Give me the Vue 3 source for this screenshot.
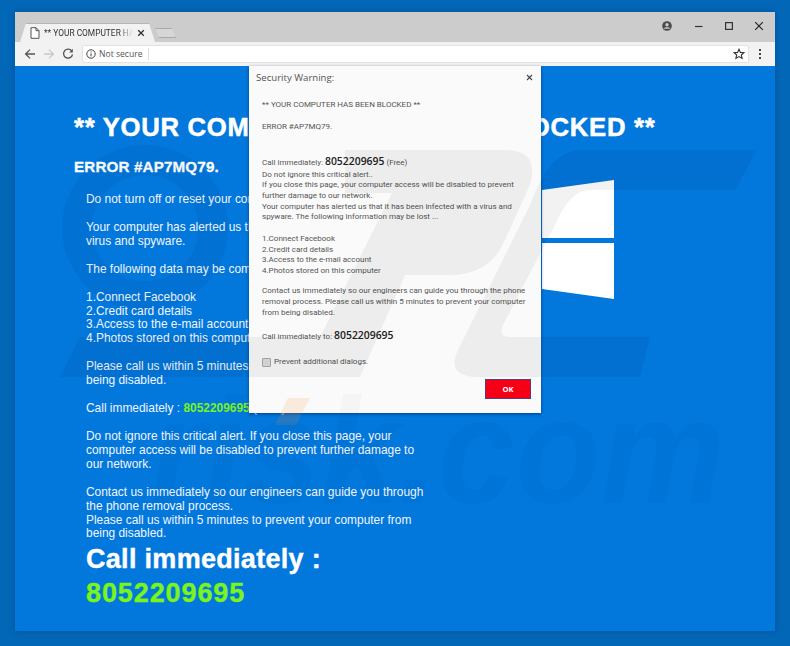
<template>
  <div class="screen">
    <div class="browser">
      <div class="titlebar">
        <div class="tab">
          <svg class="tab-doc" width="10" height="12" viewBox="0 0 10 12">
            <path d="M1 .7h5l3 3v7.6H1z M6 .7v3h3" fill="#fff" stroke="#555" stroke-width="1" />
          </svg>
          <span class="tab-title">** YOUR COMPUTER HAS BEEN BLOCKED **</span>
          <svg class="tab-close" width="8" height="8" viewBox="0 0 8 8">
            <path d="M1.2 1.2l5.6 5.6M6.8 1.2L1.2 6.8" stroke="#333" stroke-width="1.3" />
          </svg>
        </div>
        <div class="newtab"></div>
        <div class="winbtns">
          <svg class="user" width="10" height="10" viewBox="0 0 10 10">
            <circle cx="5" cy="5" r="4.8" fill="#4a4a4a" />
            <circle cx="5" cy="3.8" r="1.7" fill="#ccc" />
            <path d="M1.9 7.2c1.4-1.3 4.8-1.3 6.2 0v.6H1.9z" fill="#ccc" />
          </svg>
          <svg width="10" height="10" viewBox="0 0 10 10" class="min"><path d="M1 5.5h7.5" stroke="#333" stroke-width="1.2" /></svg>
          <svg width="10" height="10" viewBox="0 0 10 10" class="max"><rect x="1.6" y="1.6" width="6.8" height="6.8" fill="none" stroke="#333" stroke-width="1.2" /></svg>
          <svg width="10" height="10" viewBox="0 0 10 10" class="cls"><path d="M1.2 1.2l7.6 7.6M8.8 1.2L1.2 8.8" stroke="#222" stroke-width="1.2" /></svg>
        </div>
      </div>

      <div class="toolbar">
        <svg class="nav" width="12" height="12" viewBox="0 0 12 12"><path d="M11 6H2M6 1.6L1.6 6 6 10.4" fill="none" stroke="#555" stroke-width="1.3" /></svg>
        <svg class="nav" width="12" height="12" viewBox="0 0 12 12"><path d="M1 6h9M6 1.6L10.4 6 6 10.4" fill="none" stroke="#c9c9c9" stroke-width="1.3" /></svg>
        <svg class="nav" width="12" height="12" viewBox="0 0 12 12"><path d="M10 3.4A4.5 4.5 0 1 0 10.5 6.5" fill="none" stroke="#555" stroke-width="1.3" /><path d="M10.8 .8v3.6H7.2z" fill="#555" /></svg>
        <div class="omnibox">
          <svg width="10" height="10" viewBox="0 0 10 10" class="info">
            <circle cx="5" cy="5" r="4.2" fill="none" stroke="#444" stroke-width="1" />
            <path d="M5 4.4v3M5 2.5v1" stroke="#444" stroke-width="1" />
          </svg>
          <span class="secure">Not secure</span>
          <span class="sep"></span>
          <svg class="star" width="12" height="12" viewBox="0 0 12 12">
            <path d="M6 1.2l1.4 3.2 3.5.3-2.6 2.3.8 3.4L6 8.6l-3.1 1.8.8-3.4L1.1 4.7l3.5-.3z" fill="none" stroke="#333" stroke-width="1.1" />
          </svg>
        </div>
        <div class="dots"><i></i><i></i><i></i></div>
      </div>

      <div class="page">
        <h1>** YOUR COMPUTER HAS BEEN BLOCKED **</h1>
        <h2>ERROR #AP7MQ79.</h2>
        <div class="body-text">
          <p>Do not turn off or reset your computer.</p>
          <p>Your computer has alerted us that it has been infected with a virus and spyware.</p>
          <p>The following data may be compromised...</p>
          <p>
            <span v-for="item in lossList" :key="item" class="line">{{ item }}</span>
          </p>
          <p>Please call us within 5 minutes to prevent your computer from being disabled.</p>
          <p>Call immediately : <b class="green">8052209695</b> (Free)</p>
          <p>Do not ignore this critical alert. If you close this page, your computer access will be disabled to prevent further damage to our network.</p>
          <p class="last">
            Contact us immediately so our engineers can guide you through the phone removal process.<br />
            Please call us within 5 minutes to prevent your computer from being disabled.
          </p>
        </div>
        <div class="big">Call immediately :</div>
        <div class="big digits green">8052209695</div>

        <svg class="winlogo" width="74" height="120" viewBox="0 0 74 120">
          <path d="M0 10L72 0v58H0z" fill="#fff" />
          <path d="M0 63h72v56L0 109z" fill="#fff" />
        </svg>
      </div>
    </div>

    <div class="dialog">
      <div class="dlg-head">
        <span>Security Warning:</span>
        <svg width="7" height="7" viewBox="0 0 7 7"><path d="M1 1l5 5M6 1L1 6" stroke="#444" stroke-width="1.1" /></svg>
      </div>
      <div class="dlg-body">
        <p class="first">** YOUR COMPUTER HAS BEEN BLOCKED **</p>
        <p class="gap-big">ERROR #AP7MQ79.</p>
        <p>
          <span class="line call-line">Call immediately: <b class="num">8052209695</b> <small>(Free)</small></span>
          Do not ignore this critical alert..<br />
          If you close this page, your computer access will be disabled to prevent further damage to our network.<br />
          Your computer has alerted us that it has been infected with a virus and spyware. The following information may be lost ...
        </p>
        <p class="list">
          <span v-for="item in lossList" :key="item" class="line">{{ item }}</span>
        </p>
        <p class="contact">Contact us immediately so our engineers can guide you through the phone removal process. Please call us within 5 minutes to prevent your computer from being disabled.</p>
        <p class="call-to">Call immediately to: <b class="num">8052209695</b></p>
        <label class="prevent"><span class="box"></span>Prevent additional dialogs.</label>
      </div>
      <div class="dlg-foot"><button class="ok">OK</button></div>
    </div>

    <svg class="watermark" width="790" height="646" viewBox="0 0 790 646">
      <circle cx="145" cy="228" r="68" />
      <path d="M345 150H505Q540 150 530 185L505 240Q490 275 450 275H405L360 377H300L392 193H345Z" />
      <path d="M60 377L80 337H320L300 377Z" />
      <path d="M580 150H757L735 190H590Q570 190 555 225L503 325Q498 337 510 337H650L640 377H480Q445 377 458 350L530 205Q550 150 580 150Z" />
      <text x="150" y="503" textLength="575" lengthAdjust="spacingAndGlyphs">risk.com</text>
      <path class="dot" d="M288 398H310L296 425H275Z" />
    </svg>
  </div>
</template>

<script setup>
const lossList = [
  '1.Connect Facebook',
  '2.Credit card details',
  '3.Access to the e-mail account',
  '4.Photos stored on this computer'
]
</script>

<style>
html, body {
  margin: 0;
  overflow: hidden;
}
</style>

<style scoped>
.screen {
  position: relative;
  width: 790px;
  height: 646px;
  box-sizing: border-box;
  padding: 12px 15px 15px;
  background: #0367b8;
  display: flex;
  overflow: hidden;
  font-family: "Liberation Sans", Arial, sans-serif;
}

.browser {
  flex: 1;
  display: flex;
  flex-direction: column;
  box-shadow: 0 0 6px rgba(0, 40, 90, 0.35);
}

.titlebar {
  height: 30px;
  background: #cccccc;
  display: flex;
  align-items: flex-end;
  padding-left: 5px;
}

.tab {
  width: 135px;
  height: 19px;
  background: #f2f2f2;
  border-top: 1px solid #b5b5b5;
  box-sizing: border-box;
  clip-path: polygon(6px 0, calc(100% - 6px) 0, 100% 100%, 0 100%);
  padding: 0 10px 0 10px;
  display: flex;
  align-items: center;
  gap: 4px;
  color: #333;
}

.tab-doc {
  flex: none;
}

.tab-title {
  flex: 1;
  min-width: 0;
  white-space: nowrap;
  overflow: hidden;
  font-family: Roboto, sans-serif;
  font-size: 8.4px;
  -webkit-mask-image: linear-gradient(90deg, #000 85%, transparent);
  mask-image: linear-gradient(90deg, #000 85%, transparent);
}

.tab-close {
  flex: none;
}

.newtab {
  width: 21px;
  height: 10px;
  margin: 0 0 4px 0;
  background: #d6d6d6;
  border: 1px solid #aaa;
  box-sizing: border-box;
  clip-path: polygon(0 0, 80% 0, 100% 100%, 20% 100%);
}

.winbtns {
  margin-left: auto;
  align-self: flex-start;
  height: 20px;
  display: flex;
  align-items: center;
  padding-top: 4px;
  padding-right: 11px;
}

.min {
  margin-left: 22px;
}

.max {
  margin-left: 20px;
}

.cls {
  margin-left: 20px;
}

.toolbar {
  height: 24px;
  background: #f2f2f2;
  display: flex;
  align-items: center;
  padding: 0 0 0 9px;
  box-sizing: border-box;
}

.nav {
  margin-right: 7px;
  flex: none;
}

.omnibox {
  margin-left: 1px;
  width: 667px;
  height: 18px;
  box-sizing: border-box;
  background: #fff;
  border: 1px solid #e2e2e2;
  border-radius: 2px;
  display: flex;
  align-items: center;
  padding: 0 3px 0 3px;
}

.info {
  flex: none;
}

.secure {
  margin-left: 3px;
  font-family: "Open Sans", sans-serif;
  font-size: 8.6px;
  color: #555;
}

.sep {
  width: 1px;
  height: 12px;
  margin-left: 5px;
  background: #ddd;
}

.star {
  margin-left: auto;
}

.dots {
  margin-left: 10px;
  display: flex;
  flex-direction: column;
  gap: 2px;
}

.dots i {
  width: 2px;
  height: 2px;
  background: #444;
  display: block;
}

.page {
  flex: 1;
  position: relative;
  background: #0277dc;
  color: #fff;
  padding: 46px 0 0 59px;
  overflow: hidden;
}

h1 {
  margin: 0;
  font-size: 25.7px;
  line-height: 30px;
  letter-spacing: 0.7px;
  white-space: nowrap;
  font-weight: 700;
  -webkit-text-stroke: 0.5px #fff;
}

h2 {
  margin: 16px 0 0;
  font-size: 15.2px;
  line-height: 18px;
  letter-spacing: 0.15px;
  font-weight: 700;
  -webkit-text-stroke: 0.3px #fff;
}

.body-text {
  margin: 17px 0 0 12px;
  width: 345px;
  font-size: 11.93px;
  line-height: 13.9px;
  color: #f1f6fc;
}

.body-text p {
  margin: 0 0 14px;
}

.body-text .last {
  margin-bottom: 1px;
}

.line {
  display: block;
}

.green {
  color: #7cf31b;
}

.big {
  margin-left: 12px;
  font-size: 27px;
  font-weight: 700;
  line-height: 34px;
  letter-spacing: 0.3px;
  -webkit-text-stroke: 0.4px currentColor;
}

.digits {
  letter-spacing: 0.9px;
}

.winlogo {
  position: absolute;
  left: 527px;
  top: 114px;
}

.dialog {
  position: absolute;
  left: 249px;
  top: 66px;
  width: 292px;
  height: 347px;
  background: #fafafa;
  box-shadow: 0 1px 3px rgba(0, 30, 80, 0.6);
  font-family: Roboto, "Noto Sans", sans-serif;
  color: #555;
  display: flex;
  flex-direction: column;
}

.dlg-head {
  padding: 3px 8px 0 7px;
  display: flex;
  justify-content: space-between;
  align-items: center;
  font-family: "Open Sans", sans-serif;
  font-size: 9.6px;
  height: 16px;
}

.dlg-body {
  flex: 1;
  padding: 15px 13px 0;
  font-size: 8px;
  line-height: 10.7px;
}

.dlg-body p {
  margin: 0 0 10.7px;
}

.dlg-body .first {
  margin-bottom: 11.7px;
}

.dlg-body .gap-big {
  margin-bottom: 22px;
}

.call-line {
  line-height: 12.5px;
}

.num {
  font-family: "Open Sans", sans-serif;
  font-size: 10.4px;
  font-weight: 600;
  color: #222;
}

.dlg-body small {
  font-size: 8px;
}

.dlg-body .list {
  margin-bottom: 9.5px;
}

.dlg-body .contact {
  margin-bottom: 12px;
}

.dlg-body .call-to {
  margin-bottom: 14px;
}

.prevent {
  display: flex;
  align-items: center;
  gap: 3px;
}

.box {
  width: 7px;
  height: 7px;
  background: #ddd;
  border: 1px solid #aaa;
  border-radius: 1px;
}

.dlg-foot {
  padding: 0 10px 14px;
  display: flex;
  justify-content: flex-end;
}

.ok {
  width: 46px;
  height: 20px;
  background: #f50016;
  border: 1px solid #5a3a80;
  color: #fff;
  font-family: "Open Sans", sans-serif;
  font-weight: 700;
  font-size: 7.6px;
  padding: 0;
}

.watermark {
  position: absolute;
  left: 0;
  top: 0;
  pointer-events: none;
  fill: rgba(0, 0, 0, 0.05);
}

.watermark circle {
  fill: none;
  stroke: rgba(0, 0, 0, 0.035);
  stroke-width: 30px;
}

.watermark text {
  font-family: "Liberation Sans", sans-serif;
  font-weight: 700;
  font-style: italic;
  font-size: 150px;
  fill: rgba(0, 0, 0, 0.018);
}

.watermark .dot {
  fill: rgba(255, 140, 40, 0.14);
}
</style>
